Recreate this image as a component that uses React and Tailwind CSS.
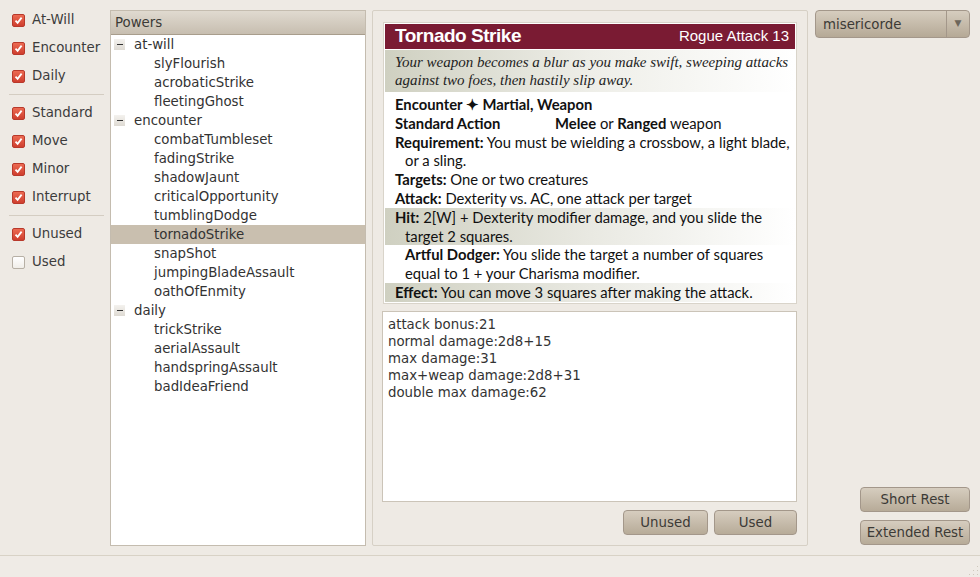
import React from "react";

const filters = [
  [
    { label: "At-Will", on: true },
    { label: "Encounter", on: true },
    { label: "Daily", on: true },
  ],
  [
    { label: "Standard", on: true },
    { label: "Move", on: true },
    { label: "Minor", on: true },
    { label: "Interrupt", on: true },
  ],
  [
    { label: "Unused", on: true },
    { label: "Used", on: false },
  ],
];

const powers = [
  { name: "at-will", items: ["slyFlourish", "acrobaticStrike", "fleetingGhost"] },
  {
    name: "encounter",
    items: [
      "combatTumbleset",
      "fadingStrike",
      "shadowJaunt",
      "criticalOpportunity",
      "tumblingDodge",
      "tornadoStrike",
      "snapShot",
      "jumpingBladeAssault",
      "oathOfEnmity",
    ],
  },
  { name: "daily", items: ["trickStrike", "aerialAssault", "handspringAssault", "badIdeaFriend"] },
];

const stats = [
  "attack bonus:21",
  "normal damage:2d8+15",
  "max damage:31",
  "max+weap damage:2d8+31",
  "double max damage:62",
];

function Check({ on }) {
  if (!on) {
    return (
      <span className="w-[13px] h-[13px] rounded-[2px] border border-[#b7b0a5] bg-gradient-to-b from-white to-[#f1eee9]" />
    );
  }
  return (
    <span className="w-[13px] h-[13px] rounded-[2px] border border-[#b8392b] bg-gradient-to-b from-[#ec6a52] to-[#cf3e2e] flex items-center justify-center">
      <svg width="9" height="9" viewBox="0 0 9 9">
        <path d="M1.5 4.6 L3.6 6.8 L7.6 1.6" fill="none" stroke="#fff" strokeWidth="1.8" />
      </svg>
    </span>
  );
}

function Button({ children, className }) {
  return (
    <div
      className={
        "h-[25px] rounded-[4px] border border-[#a3978a] bg-gradient-to-b from-[#d6cdbf] to-[#b7ab98] flex items-center justify-center text-[#3c3a36] " +
        className
      }
    >
      {children}
    </div>
  );
}

function Expander() {
  return (
    <span className="w-[11px] h-[11px] bg-gradient-to-b from-[#f4f2ee] to-[#dedad3] flex items-center justify-center">
      <span className="w-[6px] h-px bg-[#333]" />
    </span>
  );
}

export default function App() {
  return (
    <div className="w-[980px] h-[577px] bg-[#eeeae4] flex flex-col overflow-hidden font-['DejaVu_Sans',sans-serif] text-[13.33px] text-[#3c3c3c]">
      <div className="flex h-[555px]">
        {/* filters */}
        <div className="w-[110px] pt-[6px]">
          {filters.map((group, gi) => (
            <div key={gi}>
              {gi > 0 && <div className="ml-[9px] mr-[6px] my-[4px] h-px bg-[#d4cdc2]" />}
              {group.map((f) => (
                <div key={f.label} className="h-[28px] flex items-center pl-[12px]">
                  <Check on={f.on} />
                  <span className="ml-[7px]">{f.label}</span>
                </div>
              ))}
            </div>
          ))}
        </div>

        {/* powers tree */}
        <div className="w-[256px] mt-[10px] mb-[9px] border border-[#c4bcaf] bg-white flex flex-col">
          <div className="h-[24px] border-b border-[#a89d8c] bg-gradient-to-b from-[#e0dad0] to-[#c7beb0] flex items-center pl-[4px] text-[#3c3a36]">
            Powers
          </div>
          {powers.map((g) => (
            <div key={g.name}>
              <div className="h-[19px] flex items-center pl-[3px]">
                <Expander />
                <span className="ml-[9px] text-[#333]">{g.name}</span>
              </div>
              {g.items.map((p) => (
                <div
                  key={p}
                  className={
                    "h-[19px] flex items-center pl-[43px] text-[#333] " +
                    (p === "tornadoStrike" ? "bg-[#c9bfaf]" : "")
                  }
                >
                  {p}
                </div>
              ))}
            </div>
          ))}
        </div>

        {/* power detail */}
        <div className="w-[436px] ml-[6px] mt-[10px] mb-[9px] border border-[#d6d0c5] rounded-[2px] px-[10px] pt-[11px] pb-[10px] flex flex-col">
          <div className="h-[282px] border border-[#d9d4ca] bg-white p-px flex flex-col">
            <div className="h-[25px] bg-[#7a1b33] flex items-center justify-between pl-[10px] pr-[6px] text-white font-['Liberation_Sans',sans-serif]">
              <span className="font-bold text-[19px] tracking-tight">Tornado Strike</span>
              <span className="text-[15px]">Rogue Attack 13</span>
            </div>
            <div className="mt-px bg-gradient-to-r from-[#cfd0c1] via-[#eeeee8] to-white pl-[10px] pr-[2px] py-[3px] font-['Liberation_Serif',serif] italic text-[15px] leading-[18px] text-[#1e1e1e]">
              Your weapon becomes a blur as you make swift, sweeping attacks against two foes, then hastily slip away.
            </div>
            <div className="pt-[3px] font-['Lato',sans-serif] text-[14.8px] leading-[18.8px] text-[#111]">
              <div className="pl-[10px] font-bold">Encounter ✦ Martial, Weapon</div>
              <div className="pl-[10px]">
                <span className="inline-block w-[160px] font-bold">Standard Action</span>
                <b>Melee</b> or <b>Ranged</b> weapon
              </div>
              <div className="pl-[20px] indent-[-10px]">
                <b>Requirement:</b> You must be wielding a crossbow, a light blade, or a sling.
              </div>
              <div className="pl-[10px]">
                <b>Targets:</b> One or two creatures
              </div>
              <div className="pl-[10px]">
                <b>Attack:</b> Dexterity vs. AC, one attack per target
              </div>
              <div className="pl-[20px] indent-[-10px] bg-gradient-to-r from-[#cfd0c1] via-[#e9e9e2] to-white">
                <b>Hit:</b> 2[W] + Dexterity modifier damage, and you slide the target 2 squares.
              </div>
              <div className="pl-[20px] pr-[4px]">
                <b>Artful Dodger:</b> You slide the target a number of squares equal to 1 + your Charisma modifier.
              </div>
              <div className="pl-[10px] bg-gradient-to-r from-[#cfd0c1] via-[#e9e9e2] to-white">
                <b>Effect:</b> You can move 3 squares after making the attack.
              </div>
            </div>
          </div>

          <div className="flex-1 mt-[7px] -ml-px border border-[#cbc4b8] bg-white pl-[5px] pt-[4px] leading-[17px] text-[#333]">
            {stats.map((s) => (
              <div key={s}>{s}</div>
            ))}
          </div>

          <div className="mt-[8px] flex justify-end gap-[6px]">
            <Button className="w-[85px]">Unused</Button>
            <Button className="w-[83px]">Used</Button>
          </div>
        </div>

        {/* right column */}
        <div className="w-[155px] ml-[7px] mt-[10px] mb-[10px] flex flex-col justify-between">
          <div className="h-[28px] rounded-[4px] border border-[#a3978a] bg-gradient-to-b from-[#d6cdbf] to-[#b5a996] flex">
            <span className="flex-1 pl-[7px] pt-px flex items-center text-[#3c3a36]">misericorde</span>
            <span className="w-[23px] border-l border-[#a3978a] flex items-center justify-center text-[#6d665b] text-[9px]">
              ▼
            </span>
          </div>
          <div className="self-end w-[110px] flex flex-col gap-[8px]">
            <Button>Short Rest</Button>
            <Button>Extended Rest</Button>
          </div>
        </div>
      </div>

      {/* status bar */}
      <div className="flex-1 border-t border-[#d8d2c6] bg-[#efebe6] flex justify-end items-end">
        <svg width="12" height="12" viewBox="0 0 12 12" className="mr-px mb-px">
          {[
            [10, 2],
            [10, 6],
            [6, 6],
            [10, 10],
            [6, 10],
            [2, 10],
          ].map(([x, y]) => (
            <rect key={x + "-" + y} x={x} y={y} width="1" height="1" fill="#cfc8bc" />
          ))}
        </svg>
      </div>
    </div>
  );
}
